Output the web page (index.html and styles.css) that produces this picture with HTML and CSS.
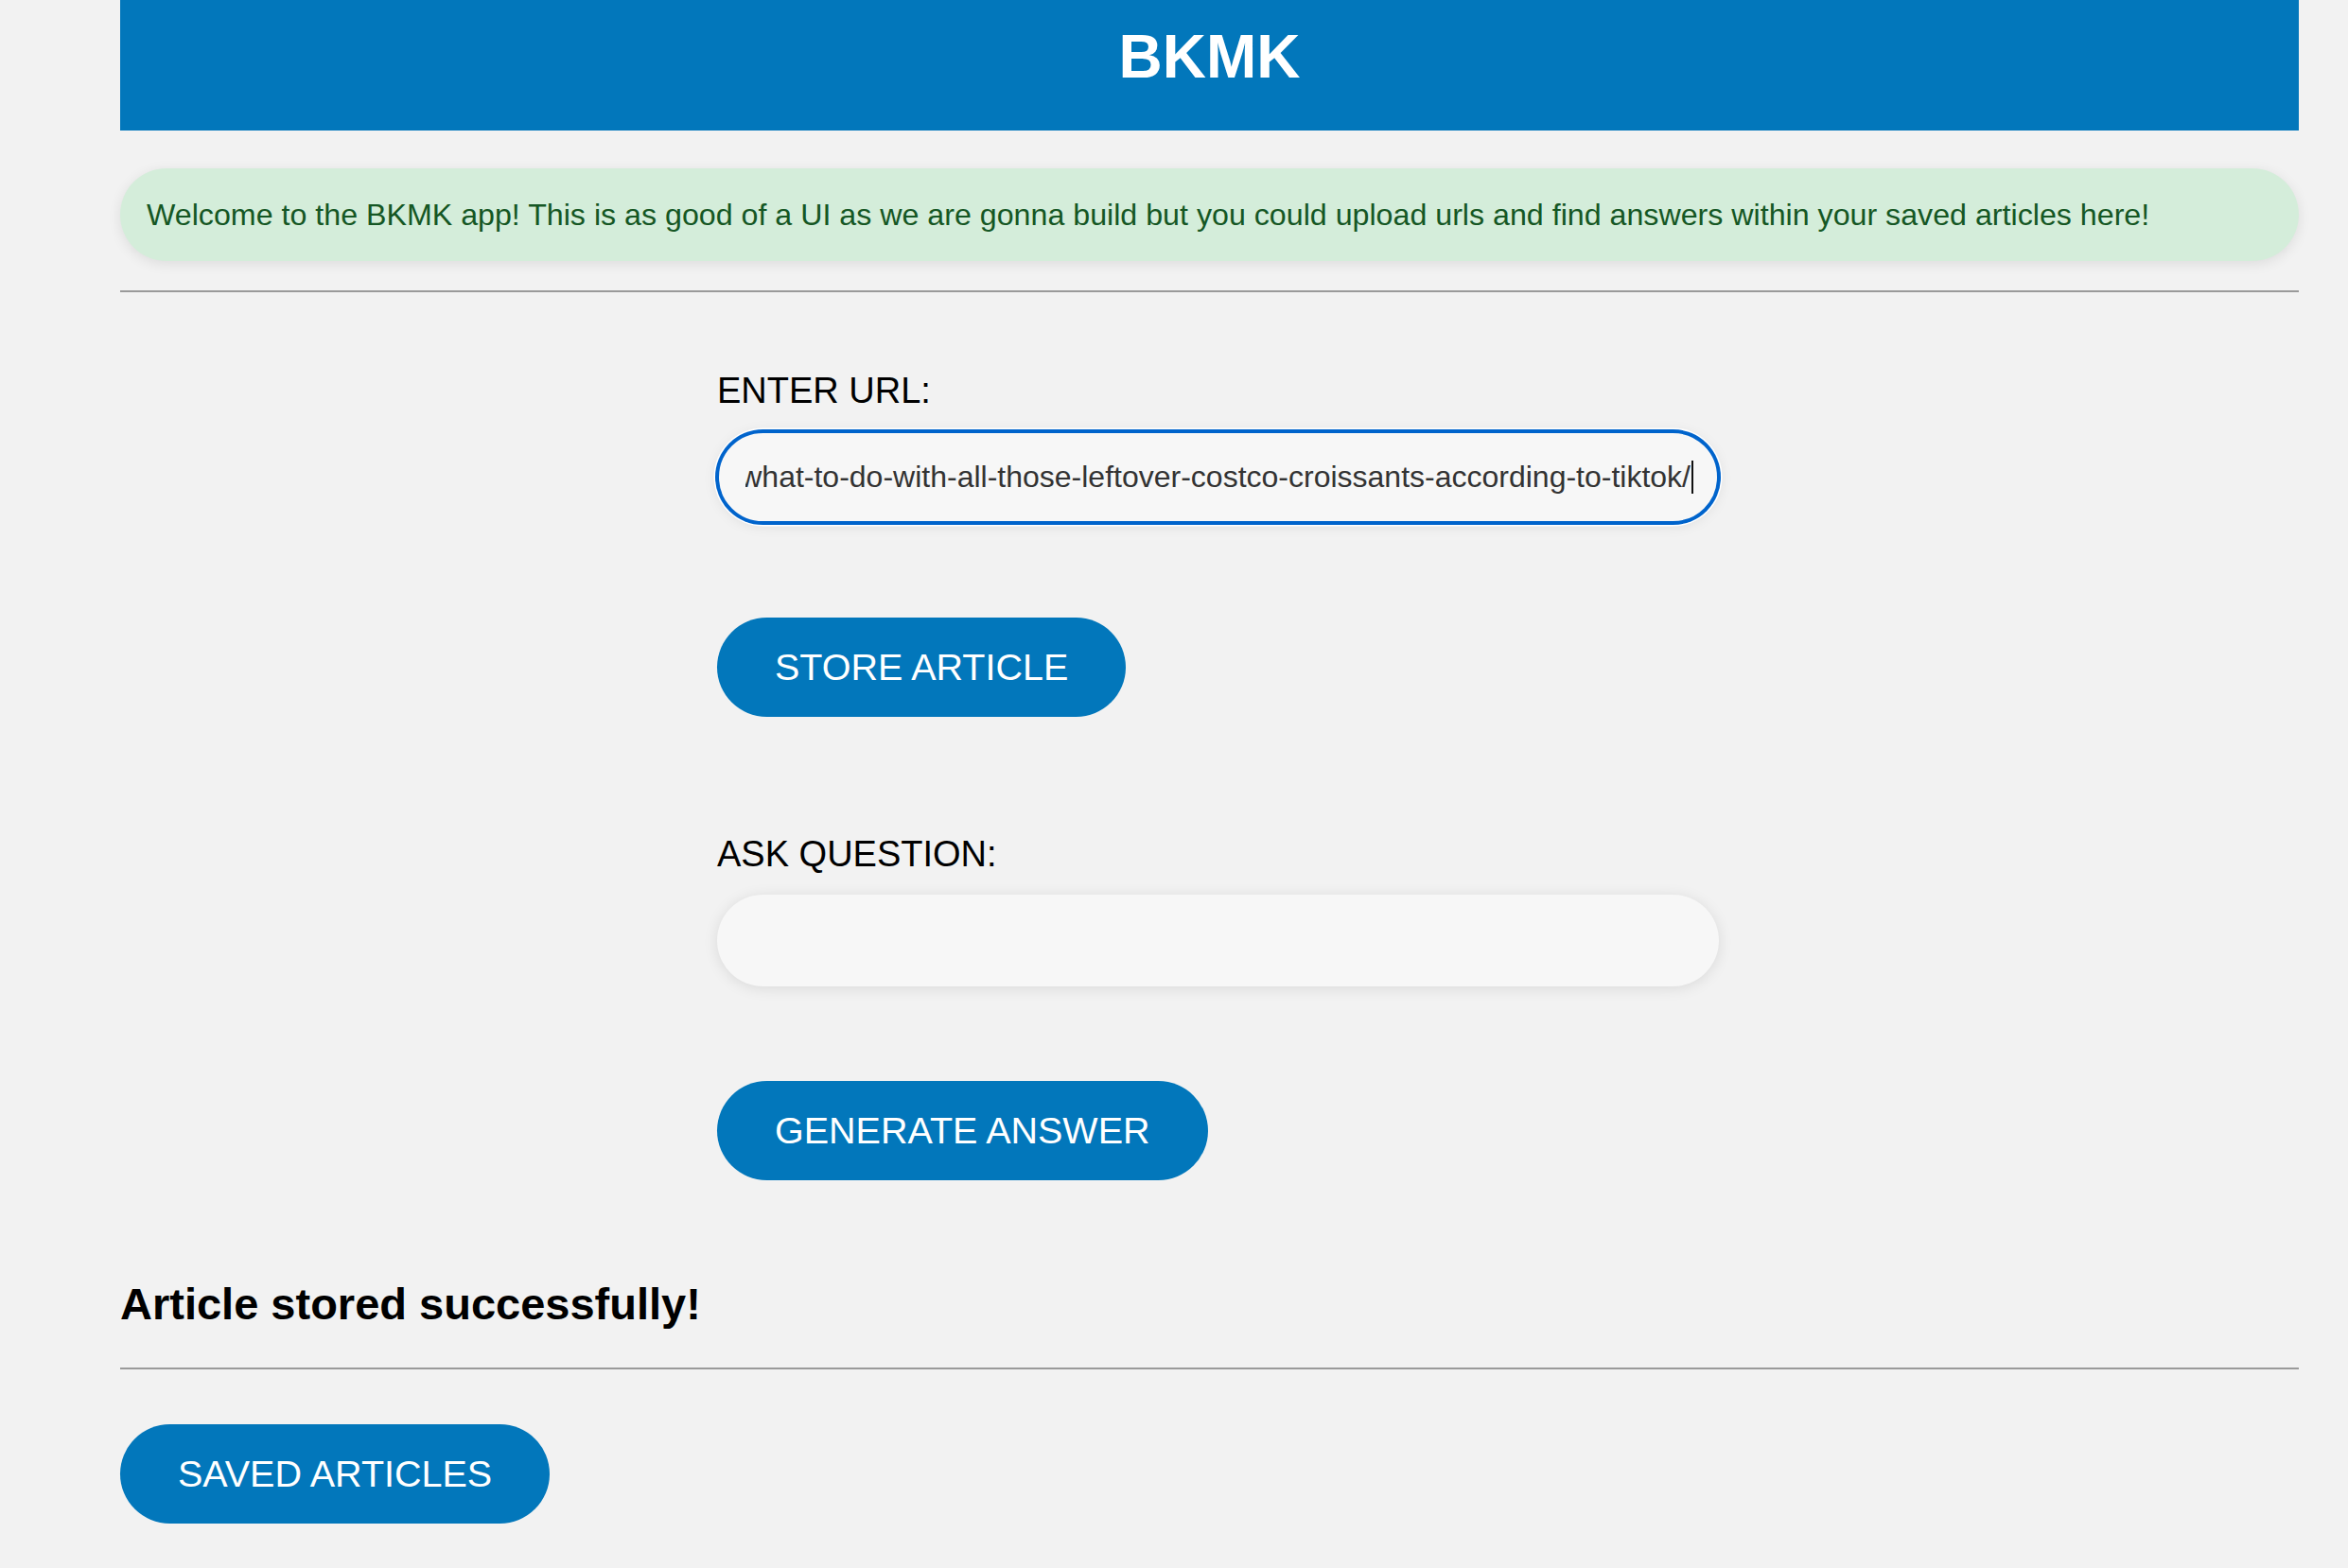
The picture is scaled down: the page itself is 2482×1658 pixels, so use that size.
FILE: index.html
```html
<!DOCTYPE html>
<html lang="en">
<head>
<meta charset="utf-8">
<title>BKMK</title>
<link rel="stylesheet" href="styles.css">
</head>
<body>
<div class="page">
  <header class="app-header">
    <h1 class="app-title">BKMK</h1>
  </header>

  <div class="welcome">Welcome to the BKMK app! This is as good of a UI as we are gonna build but you could upload urls and find answers within your saved articles here!</div>

  <hr class="rule">

  <form class="form">
    <label class="field-label">ENTER URL:</label>
    <div class="field field-focused">
      <div class="field-scroll">
        <span class="field-value">what-to-do-with-all-those-leftover-costco-croissants-according-to-tiktok/</span><span class="caret"></span>
      </div>
    </div>
    <button type="button" class="btn">STORE ARTICLE</button>

    <label class="field-label label-question">ASK QUESTION:</label>
    <input class="field" type="text">
    <button type="button" class="btn">GENERATE ANSWER</button>
  </form>

  <h2 class="status">Article stored successfully!</h2>

  <hr class="rule rule-bottom">

  <button type="button" class="btn btn-saved">SAVED ARTICLES</button>
</div>
</body>
</html>
```

FILE: styles.css
```css
html, body {
  margin: 0;
  padding: 0;
  background: #f2f2f2;
  font-family: "Liberation Sans", Arial, Helvetica, sans-serif;
}

.page {
  margin: 0 52px 0 127px;
  padding-bottom: 47px;
}

.app-header {
  background: #0277bb;
  height: 138px;
  box-sizing: border-box;
  display: flex;
  justify-content: center;
  align-items: flex-start;
}

.app-title {
  margin: 0;
  padding-top: 28px;
  font-size: 64px;
  line-height: 64px;
  font-weight: bold;
  color: #ffffff;
}

.welcome {
  margin-top: 40px;
  height: 98px;
  box-sizing: border-box;
  padding: 0 28px;
  display: flex;
  align-items: center;
  background: #d4edda;
  color: #155724;
  font-size: 32.2px;
  border-radius: 49px;
  box-shadow: 0 3px 14px rgba(0, 0, 0, 0.09);
  white-space: nowrap;
}

.rule {
  border: 0;
  height: 2px;
  background: #9a9a9a;
  margin: 31px 0 0;
}

.form {
  display: flex;
  flex-direction: column;
  align-items: flex-start;
  margin-left: 631px;
  width: 1059px;
  padding-top: 81.5px;
}

.field-label {
  font-size: 38px;
  line-height: 44px;
  color: #000000;
}

.label-question {
  margin-top: 122.5px;
}

.field {
  width: 1059px;
  height: 97px;
  margin-top: 21.5px;
  box-sizing: border-box;
  border-radius: 48.5px;
  background: #f7f7f7;
  border: 2px solid transparent;
  box-shadow: 0 2px 15px rgba(0, 0, 0, 0.1);
  font-family: "Liberation Sans", Arial, Helvetica, sans-serif;
  font-size: 32px;
  color: #333333;
  padding: 0 25px 0 28px;
  outline: none;
}

.field-focused {
  border-color: #0064cc;
  box-shadow: 0 0 0 2px #0064cc, 0 0 0 3.5px #ffffff, 0 2px 15px rgba(0, 0, 0, 0.1);
  display: flex;
  align-items: center;
}

.field-scroll {
  flex: 1;
  min-width: 0;
  overflow: hidden;
  display: flex;
  justify-content: flex-end;
  align-items: center;
  white-space: nowrap;
}

.field-value {
  flex: none;
}

.caret {
  flex: none;
  width: 2px;
  height: 35px;
  margin-left: 1px;
  background: #111111;
}

.btn {
  margin-top: 100px;
  height: 105px;
  padding: 0 61px;
  border: 0;
  border-radius: 52.5px;
  background: #0277bb;
  color: #ffffff;
  font-family: "Liberation Sans", Arial, Helvetica, sans-serif;
  font-size: 39.5px;
  cursor: pointer;
}

.status {
  margin: 103.7px 0 0;
  font-size: 47px;
  line-height: 54px;
  font-weight: bold;
  color: #000000;
}

.rule-bottom {
  margin-top: 40.3px;
}

.btn-saved {
  margin-top: 58px;
}
```
